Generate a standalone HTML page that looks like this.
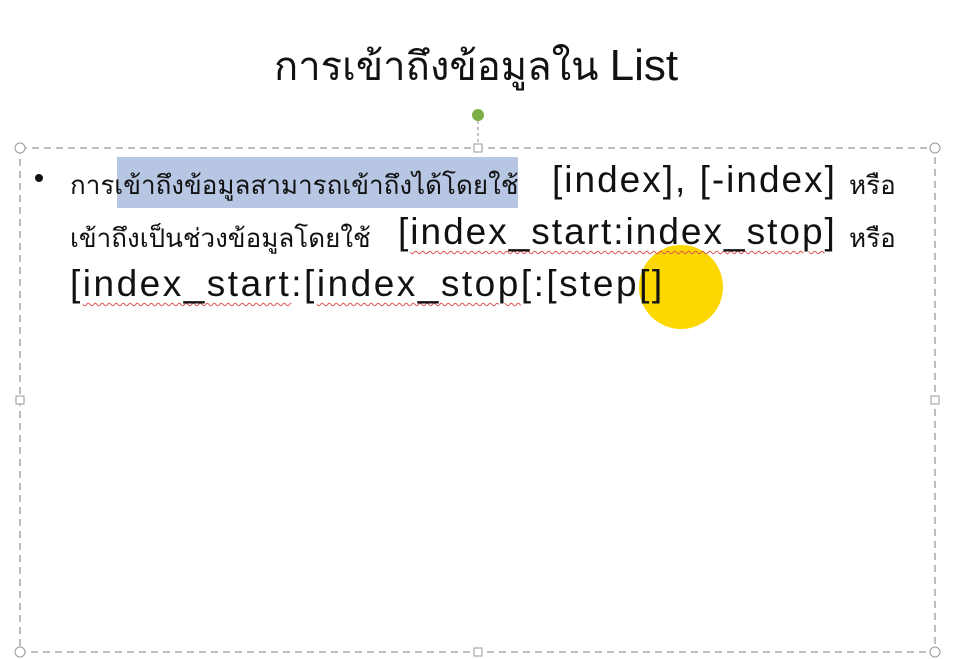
<!DOCTYPE html>
<html><head><meta charset="utf-8"><style>
body{margin:0;width:953px;height:659px;background:#fff;position:relative;overflow:hidden;font-family:"Liberation Sans","DejaVu Sans",sans-serif;color:#111}
.a{position:absolute;white-space:nowrap}
.th{font-size:26px}
.en{font-size:37px;letter-spacing:2px}
.sq{text-decoration:underline wavy #e05050 1px;text-underline-offset:6px}
</style></head><body>
<div class="a" style="left:274px;top:36px;font-size:40px;line-height:60px">การเข้าถึงข้อมูลใน <span style="font-size:44px">List</span></div>
<svg class="a" style="left:0;top:0" width="953" height="659">
<line x1="478" y1="115" x2="478" y2="148" stroke="#888" stroke-dasharray="3,3"/>
<circle cx="478" cy="115" r="6" fill="#7cae45"/>
<rect x="20" y="148" width="915" height="504" fill="none" stroke="#999" stroke-width="1.3" stroke-dasharray="7,5"/>
<rect x="117" y="157" width="401" height="51" fill="#b7c7e3"/>
<circle cx="681" cy="287" r="42" fill="#fdd800"/>
<g fill="#fff" stroke="#999"><circle cx="20" cy="148" r="5"/><circle cx="935" cy="148" r="5"/><circle cx="20" cy="652" r="5"/><circle cx="935" cy="652" r="5"/>
<rect x="474" y="144" width="8" height="8"/><rect x="474" y="648" width="8" height="8"/><rect x="16" y="396" width="8" height="8"/><rect x="931" y="396" width="8" height="8"/></g>
<circle cx="39" cy="178" r="4" fill="#111"/>
</svg>
<div class="a th" style="left:70px;top:165px">การเข้าถึงข้อมูลสามารถเข้าถึงได้โดยใช้</div>
<div class="a en" style="left:552px;top:159px">[index], [-index]</div>
<div class="a th" style="left:849px;top:165px">หรือ</div>
<div class="a th" style="left:70px;top:218px">เข้าถึงเป็นช่วงข้อมูลโดยใช้</div>
<div class="a en" style="left:398px;top:211px">[<span class="sq">index_start:index_stop</span>]</div>
<div class="a th" style="left:849px;top:218px">หรือ</div>
<div class="a en" style="left:70px;top:263px;letter-spacing:2.5px">[<span class="sq">index_start</span>:[<span class="sq">index_stop</span>[:[step[]</div>
</body></html>
